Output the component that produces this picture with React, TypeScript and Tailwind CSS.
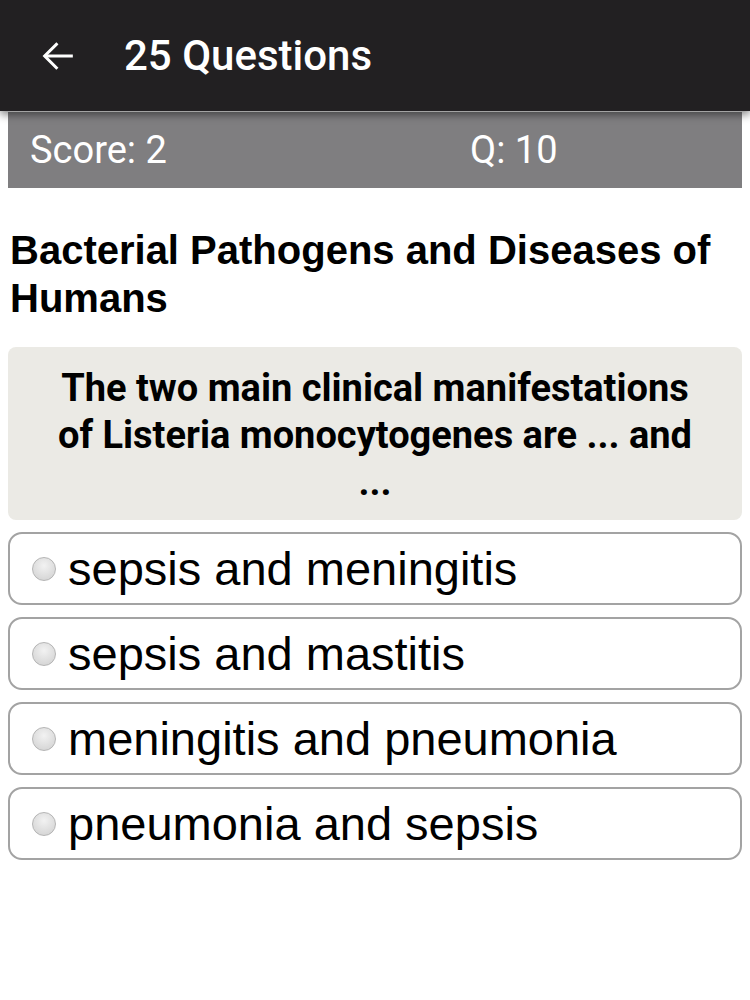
const options = [
  "sepsis and meningitis",
  "sepsis and mastitis",
  "meningitis and pneumonia",
  "pneumonia and sepsis",
];

export default function App() {
  return (
    <div className="min-h-[1000px] bg-white font-['Roboto','Liberation_Sans',sans-serif] text-black">
      <header className="relative z-10 flex h-[111px] items-center bg-[#222022] pl-[38px] text-white shadow-[0_4px_8px_rgba(0,0,0,0.45)]">
        <svg width="40" height="40" viewBox="0 0 24 24" fill="none" stroke="currentColor" strokeWidth="1.8" strokeLinecap="square">
          <path d="M20 12H5" />
          <path d="M11 5l-7 7 7 7" />
        </svg>
        <h1 className="ml-[46px] text-[42px] font-medium">25 Questions</h1>
      </header>

      <div className="mx-2 mt-px flex h-[76px] items-center bg-[#7f7e80] pl-[22px] text-[38px] text-white">
        <span className="w-[440px]">Score: 2</span>
        <span>Q: 10</span>
      </div>

      <h2 className="mt-[38px] px-[10px] font-['Liberation_Sans',Arial,sans-serif] text-[40px] font-bold leading-[48px]">
        Bacterial Pathogens and Diseases of Humans
      </h2>

      <div className="mx-2 mt-[25px] rounded-lg bg-[#ebeae5] px-[37px] pb-[14px] pt-[18px] text-center text-[38px] font-bold leading-[47px]">
        The two main clinical manifestations of Listeria monocytogenes are ... and ...
      </div>

      <div className="mx-2 mt-[12px] flex flex-col gap-[12px]">
        {options.map((o) => (
          <label
            key={o}
            className="flex h-[73px] items-center rounded-[14px] border-2 border-[#a3a3a3] bg-white pl-[22px]"
          >
            <span className="h-[24px] w-[24px] shrink-0 rounded-full border border-[#b5b5b5] bg-[radial-gradient(circle_at_50%_35%,#f2f2f2,#cfcfcf)]" />
            <span className="ml-[12px] font-['Liberation_Sans',Arial,sans-serif] text-[47px] leading-none">{o}</span>
          </label>
        ))}
      </div>
    </div>
  );
}
